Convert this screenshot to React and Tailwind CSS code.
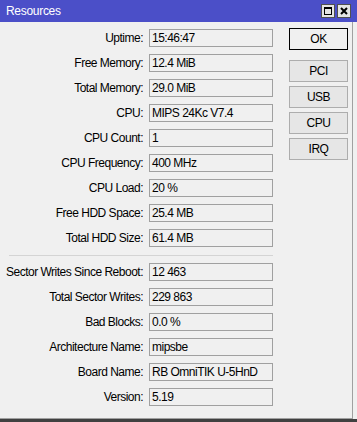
import React from 'react';

const rowsTop = [
  ['Uptime', '15:46:47'],
  ['Free Memory', '12.4 MiB'],
  ['Total Memory', '29.0 MiB'],
  ['CPU', 'MIPS 24Kc V7.4'],
  ['CPU Count', '1'],
  ['CPU Frequency', '400 MHz'],
  ['CPU Load', '20 %'],
  ['Free HDD Space', '25.4 MB'],
  ['Total HDD Size', '61.4 MB'],
];

const rowsBottom = [
  ['Sector Writes Since Reboot', '12 463'],
  ['Total Sector Writes', '229 863'],
  ['Bad Blocks', '0.0 %'],
  ['Architecture Name', 'mipsbe'],
  ['Board Name', 'RB OmniTIK U-5HnD'],
  ['Version', '5.19'],
];

const Row = ({ label, value }) => (
  <div className="flex items-center gap-[6px] h-[18px]">
    <div className="w-[143px] text-right whitespace-nowrap">{label}:</div>
    <div className="w-[124px] h-[18px] border border-[#a0a0a0] bg-[#f0f0f0] pl-[2px] flex items-center whitespace-nowrap">
      {value}
    </div>
  </div>
);

const SideButton = ({ children, main }) => (
  <button
    className={
      'w-[59px] h-[22px] flex items-center justify-center ' +
      (main ? 'border border-black bg-[#f0f0f0]' : 'border border-[#adadad] bg-[#e6e6e6]')
    }
  >
    {children}
  </button>
);

export default function App() {
  return (
    <div
      className="w-[357px] h-[422px] bg-[#f0f0f0] flex flex-col text-[12px] text-black tracking-[-0.5px] overflow-hidden"
      style={{ fontFamily: '"Liberation Sans", Arial, sans-serif' }}
    >
      {/* title bar */}
      <div className="h-[22px] bg-[#4b4fc8] flex items-center justify-between pl-[6px] pr-[6px] shrink-0">
        <span className="text-white text-[12px] tracking-[-0.3px]">Resources</span>
        <div className="flex gap-[2px]">
          <div className="w-[14px] h-[14px] bg-[#e4e4e4] border border-[#505050] flex items-center justify-center">
            <div className="w-[8px] h-[8px] border border-black border-t-2" />
          </div>
          <div className="w-[14px] h-[14px] bg-[#e4e4e4] border border-[#505050] flex items-center justify-center">
            <svg width="8" height="8" viewBox="0 0 8 8">
              <path d="M1 1 L7 7 M7 1 L1 7" stroke="black" strokeWidth="2" />
            </svg>
          </div>
        </div>
      </div>

      {/* body */}
      <div className="flex flex-1 min-h-0">
        <div className="w-[353px] border-r border-b border-[#a0a0a0] flex pt-[7px]">
          <div className="flex flex-col">
            <div className="flex flex-col gap-[7px]">
              {rowsTop.map(([l, v]) => (
                <Row key={l} label={l} value={v} />
              ))}
            </div>
            <div className="ml-[9px] w-[264px] h-px bg-[#d4d4d4] mt-[8px] mb-[7px]" />
            <div className="flex flex-col gap-[7px]">
              {rowsBottom.map(([l, v]) => (
                <Row key={l} label={l} value={v} />
              ))}
            </div>
          </div>
          <div className="ml-[16px] -mt-[1px] flex flex-col">
            <SideButton main>OK</SideButton>
            <div className="flex flex-col gap-[4px] mt-[10px]">
              <SideButton>PCI</SideButton>
              <SideButton>USB</SideButton>
              <SideButton>CPU</SideButton>
              <SideButton>IRQ</SideButton>
            </div>
          </div>
        </div>
      </div>
      <div className="h-[3px] bg-[#404040] shrink-0" />
    </div>
  );
}
